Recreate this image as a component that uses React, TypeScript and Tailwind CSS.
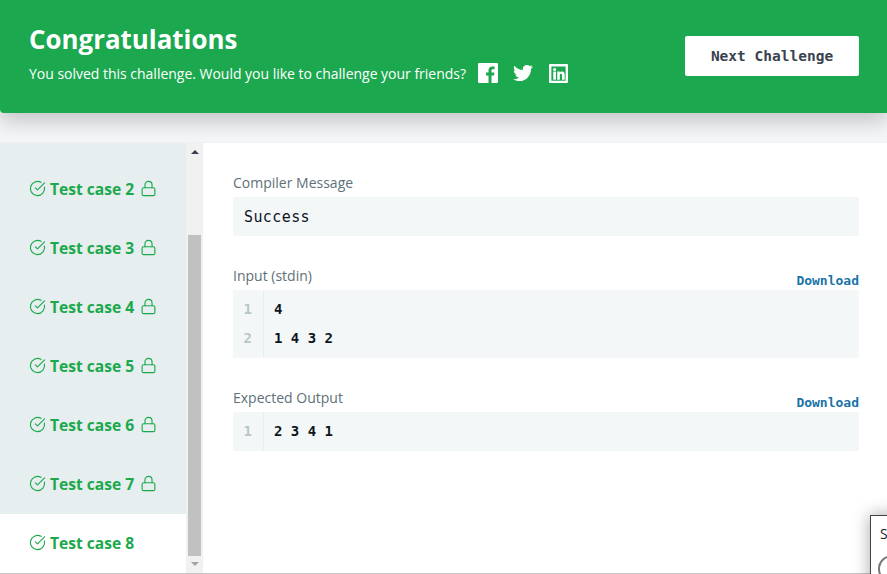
import { CircleCheckBig, Lock } from 'lucide-react';
import { FaTwitter } from 'react-icons/fa';

const SANS = "font-['Open_Sans',sans-serif]";
const MONO = "font-['DejaVu_Sans_Mono',monospace]";

const CASES = [2, 3, 4, 5, 6, 7];

const FacebookIcon = () => (
  <svg viewBox="0 0 20 20" className="w-[20px] h-[20px] ml-[12px] fill-white">
    <path d="M19 0H1a1 1 0 0 0-1 1v18a1 1 0 0 0 1 1h9.5v-7.5H8V9.5h2.5V7.3c0-2.5 1.5-3.9 3.8-3.9 1.1 0 2 .1 2.3.1v2.7h-1.6c-1.2 0-1.5.6-1.5 1.4v1.9h2.9l-.4 3h-2.5V20H19a1 1 0 0 0 1-1V1a1 1 0 0 0-1-1z" />
  </svg>
);

const LinkedinIcon = () => (
  <svg viewBox="0 0 20 20" className="w-[19px] h-[19px] ml-[16px] fill-white">
    <path
      fillRule="evenodd"
      d="M1 0h18a1 1 0 0 1 1 1v18a1 1 0 0 1-1 1H1a1 1 0 0 1-1-1V1a1 1 0 0 1 1-1zm1.500 2.500v15h15v-15z"
    />
    <circle cx="5.900" cy="5.800" r="1.600" />
    <rect x="4.500" y="8" width="2.800" height="8.500" />
    <path d="M8.700 8h2.600v1.200c.5-.9 1.400-1.400 2.500-1.400 2 0 2.700 1.400 2.700 3.600v5.100h-2.800v-4.700c0-.9-.3-1.500-1.100-1.500-.9 0-1.200.7-1.200 1.600v4.600H8.700z" />
  </svg>
);

const TestCase = ({ n, locked, active }: { n: number; locked?: boolean; active?: boolean }) => (
  <div className={`flex items-center h-[59px] pl-[29px] ${active ? 'bg-white' : ''}`}>
    <CircleCheckBig className="w-[17px] h-[17px] mb-[2px] text-[#1ba94c] mr-[4px]" strokeWidth={1.6} />
    <span className="text-[15.6px] font-bold text-[#1ba94c]">Test case {n}</span>
    {locked && <Lock className="w-[17px] h-[17px] mb-[2px] text-[#1ba94c] ml-[6px]" strokeWidth={1.6} />}
  </div>
);

const CodeBlock = ({ lines }: { lines: string[] }) => (
  <div className={`flex bg-[#f3f7f7] text-[14px] py-[5px] ${MONO}`}>
    <div className="w-[31px] border-r border-[#e7eef0] -my-[5px] py-[5px] pr-[11px] text-right font-bold text-[#b7c7ca]">
      {lines.map((_, i) => (
        <div key={i} className="h-[29px] leading-[29px]">{i + 1}</div>
      ))}
    </div>
    <div className="pl-[10px] font-bold text-[#0e141e]">
      {lines.map((line, i) => (
        <div key={i} className="h-[29px] leading-[29px] whitespace-pre">{line}</div>
      ))}
    </div>
  </div>
);

const Section = ({ title, download, children }: { title: string; download?: boolean; children: React.ReactNode }) => (
  <div>
    <div className="flex justify-between items-end h-[28px] pb-[5px]">
      <span className="text-[14px] leading-[19px] text-[#5e7078]">{title}</span>
      {download && (
        <span className={`text-[13px] leading-[14px] -mb-[3px] font-bold text-[#1a73a7] ${MONO}`}>Download</span>
      )}
    </div>
    {children}
  </div>
);

export default function App() {
  return (
    <div className={`relative h-[574px] overflow-hidden bg-[#f3f5f6] ${SANS}`}>
      {/* Banner */}
      <div className="relative z-10 flex items-center justify-between h-[113px] pl-[29px] pr-[28px] bg-[#1ca84f] rounded-bl shadow-[0_8px_20px_rgba(0,0,0,0.2)]">
        <div className="-mt-[9px]">
          <h1 className="text-[25.9px] leading-[36px] font-bold text-white">Congratulations</h1>
          <div className="flex items-center mt-[6px]">
            <p className="text-[14px] tracking-[-0.015px] text-white">You solved this challenge. Would you like to challenge your friends?</p>
            <FacebookIcon />
            <FaTwitter className="w-[20px] h-[20px] ml-[15px] text-white" />
            <LinkedinIcon />
          </div>
        </div>
        <button className={`w-[174px] h-[40px] -mt-[1px] pt-[1px] bg-white rounded-[2px] text-[14.5px] font-bold text-[#39424e] ${MONO}`}>
          Next Challenge
        </button>
      </div>

      {/* Results */}
      <div className="flex h-[432px] mt-[29px] border-t border-[#eef1f2] border-b border-b-[#c4c6c8] bg-white">
        <div className="w-[186px] shrink-0 bg-[#e7eef0] overflow-hidden">
          <div className="h-[17px]" />
          {CASES.map((n) => (
            <TestCase key={n} n={n} locked />
          ))}
          <TestCase n={8} active />
        </div>

        {/* Scrollbar */}
        <div className="w-[17px] shrink-0 flex flex-col items-center bg-[#f1f1f1]">
          <div className="h-[17px] flex items-center justify-center">
            <div className="border-x-[4px] border-x-transparent border-b-[4px] border-b-[#3a3f4c]" />
          </div>
          <div className="h-[75px]" />
          <div className="w-[13px] h-[321px] bg-[#c1c1c1]" />
          <div className="h-[15px] flex items-center justify-center">
            <div className="border-x-[4px] border-x-transparent border-t-[4px] border-t-[#a3a3a8]" />
          </div>
        </div>

        <div className="flex-1 pl-[30px] pr-[28px] pt-[26px] flex flex-col gap-[26px]">
          <Section title="Compiler Message">
            <div className={`h-[39px] flex items-center pl-[11px] pt-[2px] bg-[#f3f7f7] text-[15px] tracking-[0.4px] text-[#0e141e] ${MONO}`}>
              Success
            </div>
          </Section>
          <Section title="Input (stdin)" download>
            <CodeBlock lines={['4', '1 4 3 2']} />
          </Section>
          <Section title="Expected Output" download>
            <CodeBlock lines={['2 3 4 1']} />
          </Section>
        </div>
      </div>

      {/* Corner widget, cut off by the window */}
      <div className="absolute left-[870px] top-[515px] w-[60px] h-[70px] bg-white border border-[#444] shadow-[0_0_16px_rgba(0,0,0,0.35)] pl-[9px] pt-[8px]">
        <div className="text-[14px] leading-[19px] text-[#222]">S</div>
        <div className="w-[28px] h-[28px] mt-[12px] -ml-[2px] rounded-full border-2 border-[#777]" />
      </div>
    </div>
  );
}
